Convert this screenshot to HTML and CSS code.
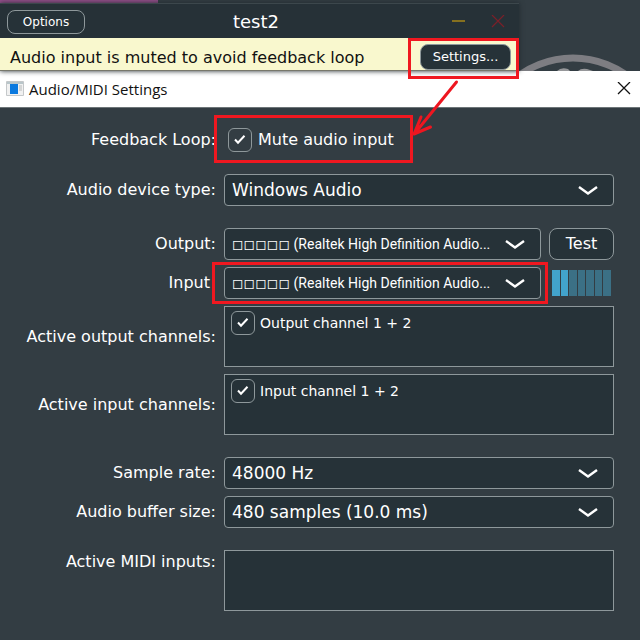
FILE: index.html
```html
<!DOCTYPE html>
<html lang="en">
<head>
<meta charset="utf-8">
<title>Audio/MIDI Settings</title>
<link rel="stylesheet" href="styles.css">
</head>
<body>
<header class="desktop">
  <div class="strip"></div>
  <svg class="dial" width="167" height="17" viewBox="473 54 167 17" aria-hidden="true">
    <circle cx="573" cy="150" r="92" fill="none" stroke="#7d7d82" stroke-width="7"/>
    <path d="M557 71q4-4 11-2l2 2zM578 71q3-3 9-2l6 2z" fill="#96979a"/>
  </svg>
  <section class="plugin">
    <div class="plugin-bar">
      <button class="btn options" type="button">Options</button>
      <h1 class="plugin-title">test2</h1>
      <div class="window-buttons">
        <button class="icon-btn" type="button" aria-label="Minimise"><svg width="14" height="14" viewBox="0 0 14 14"><path d="M0 6h13" stroke="#85701f" stroke-width="2"/></svg></button>
        <button class="icon-btn" type="button" aria-label="Close window"><svg width="14" height="14" viewBox="0 0 14 14"><path d="M1 0l12 12M13 0L1 12" stroke="#7b2029" stroke-width="1.2"/></svg></button>
      </div>
    </div>
    <div class="notice">
      <p class="notice-text">Audio input is muted to avoid feedback loop</p>
      <div class="mark mark-settings"><button class="btn settings" type="button">Settings...</button></div>
    </div>
  </section>
</header>
<main class="dialog">
  <div class="dialog-bar">
    <svg width="18" height="16" viewBox="0 0 18 16" aria-hidden="true">
      <path d="M.5 .5h17v14H.5z" fill="#f1f1f1" stroke="#c5c8ca"/>
      <path d="M1 1h16v2H1z" fill="#b9c6ca"/>
      <path d="M4 3h8v10H4z" fill="#0b79df"/>
      <path d="M13 5h3M13 7h3M13 9h3" stroke="#b7babb"/>
    </svg>
    <h2 class="dialog-title">Audio/MIDI Settings</h2>
    <button class="icon-btn" type="button" aria-label="Close"><svg width="14" height="14" viewBox="0 0 14 14"><path d="M1 0l12 12M13 0L1 12" stroke="#111" stroke-width="1.3"/></svg></button>
  </div>
  <form class="form">
    <div class="group">
      <div class="row">
        <span class="label">Feedback Loop:</span>
        <div class="mark mark-mute">
          <label class="check"><span class="tick"><input type="checkbox" checked><svg width="24" height="24" viewBox="0 0 24 24"><path d="M7 11.500l3 3.200 6.500-7" fill="none" stroke="#fff" stroke-width="2"/></svg></span>Mute audio input</label>
        </div>
      </div>
    </div>
    <div class="group">
      <div class="row">
        <label class="label" for="type">Audio device type:</label>
        <div class="combo"><select id="type"><option>Windows Audio</option></select><svg class="chevron" width="22" height="12" viewBox="0 0 22 12"><path d="M2 2l9 6.500L20 2" fill="none" stroke="#fff" stroke-width="2.4"/></svg></div>
      </div>
    </div>
    <div class="group">
      <div class="row">
        <label class="label" for="out">Output:</label>
        <div class="device">
          <div class="combo"><select id="out" class="narrow"><option>◻◻◻◻◻ (Realtek High Definition Audio...</option></select><svg class="chevron" width="22" height="12" viewBox="0 0 22 12"><path d="M2 2l9 6.500L20 2" fill="none" stroke="#fff" stroke-width="2.4"/></svg></div>
          <button class="btn test" type="button">Test</button>
        </div>
      </div>
      <div class="row">
        <label class="label label-input" for="in">Input</label>
        <div class="device">
          <div class="combo mark mark-input"><select id="in" class="narrow"><option>◻◻◻◻◻ (Realtek High Definition Audio...</option></select><svg class="chevron" width="22" height="12" viewBox="0 0 22 12"><path d="M2 2l9 6.500L20 2" fill="none" stroke="#fff" stroke-width="2.4"/></svg></div>
          <div class="level" role="meter" aria-label="Input level" aria-valuemin="0" aria-valuemax="7" aria-valuenow="2"><i class="on"></i><i class="on"></i><i></i><i></i><i></i><i></i><i></i></div>
        </div>
      </div>
      <div class="row">
        <span class="label">Active output channels:</span>
        <div class="list"><label class="check small"><span class="tick"><input type="checkbox" checked><svg width="24" height="24" viewBox="0 0 24 24"><path d="M7 11.500l3 3.200 6.500-7" fill="none" stroke="#fff" stroke-width="2"/></svg></span>Output channel 1 + 2</label></div>
      </div>
      <div class="row">
        <span class="label">Active input channels:</span>
        <div class="list"><label class="check small"><span class="tick"><input type="checkbox" checked><svg width="24" height="24" viewBox="0 0 24 24"><path d="M7 11.500l3 3.200 6.500-7" fill="none" stroke="#fff" stroke-width="2"/></svg></span>Input channel 1 + 2</label></div>
      </div>
    </div>
    <div class="group">
      <div class="row">
        <label class="label" for="rate">Sample rate:</label>
        <div class="combo"><select id="rate"><option>48000 Hz</option></select><svg class="chevron" width="22" height="12" viewBox="0 0 22 12"><path d="M2 2l9 6.500L20 2" fill="none" stroke="#fff" stroke-width="2.4"/></svg></div>
      </div>
      <div class="row">
        <label class="label" for="buffer">Audio buffer size:</label>
        <div class="combo"><select id="buffer"><option>480 samples (10.0 ms)</option></select><svg class="chevron" width="22" height="12" viewBox="0 0 22 12"><path d="M2 2l9 6.500L20 2" fill="none" stroke="#fff" stroke-width="2.4"/></svg></div>
      </div>
    </div>
    <div class="group">
      <div class="row row-top">
        <span class="label">Active MIDI inputs:</span>
        <div class="list"></div>
      </div>
    </div>
  </form>
</main>
<svg class="arrow" width="50" height="58" viewBox="410 79 50 58" aria-hidden="true">
  <path d="M456.500 82L415 133M421 117L414 134L430.500 127" fill="none" stroke="#ee1620" stroke-width="3" stroke-linecap="round" stroke-linejoin="round"/>
</svg>
</body>
</html>
```
FILE: styles.css
```css
* { box-sizing: border-box; }

body {
  margin: 0;
  min-height: 100vh;
  position: relative;
  background: #333d43;
  color: #fff;
  font: 16px/24px "DejaVu Sans", sans-serif;
}

h1, h2, p { margin: 0; font-weight: normal; }

button, select, input { font: inherit; color: inherit; margin: 0; }

.btn {
  background: #263238;
  border: 1px solid #8e989b;
  border-radius: 8px;
  padding: 0;
}

.icon-btn {
  display: flex;
  background: none;
  border: 0;
  padding: 0;
}

/* Plugin window behind the dialog */
.desktop { position: relative; }

.strip {
  height: 3px;
  width: 158px;
  background: #964f8c;
}

.dial {
  position: absolute;
  right: 0;
  bottom: 0;
}

.plugin {
  position: relative;
  width: calc(100% - 121px);
  box-shadow: 0 0 5px #20292e;
}

.plugin-bar {
  display: grid;
  grid-template-columns: 1fr auto 1fr;
  align-items: center;
  height: 35px;
  padding: 2px 14px 0 7px;
  background: #263137;
  border-top: 1px solid #3c474c;
}

.options {
  width: 78px;
  height: 24px;
  font-size: 12px;
  line-height: 20px;
}

.plugin-title { font-size: 18px; }

.window-buttons {
  display: flex;
  justify-content: flex-end;
  gap: 25px;
}

.notice {
  display: flex;
  justify-content: space-between;
  align-items: center;
  height: 33px;
  padding: 6px 8px 0 10px;
  background: #f9f8ce;
  border-bottom: 1px solid #77776b;
  color: #111;
}

.notice-text { padding-top: 2px; white-space: nowrap; }

.settings {
  display: block;
  width: 91px;
  height: 26px;
  color: #fff;
  font-size: 13px;
}

/* Red frames that point at a control */
.mark { position: relative; }

.mark::after {
  content: "";
  position: absolute;
  z-index: 2;
  border: 3px solid #f01820;
  pointer-events: none;
}

.mark-settings::after { inset: -6px -8px -9px -12px; }
.mark-mute::after { inset: -13px -19px -11px -14px; }
.mark-input::after { inset: -5px -7px -5px -12px; }

.arrow {
  position: absolute;
  left: calc(100% - 230px);
  top: 79px;
  z-index: 3;
}

/* Dialog */
.dialog-bar {
  display: flex;
  align-items: center;
  gap: 5px;
  height: 37px;
  padding: 0 9px 0 6px;
  background: #fff;
  border-bottom: 1px solid #6d7578;
  color: #111;
}

.dialog-title {
  flex: 1;
  font: 15px/24px "Open Sans", sans-serif;
}

.form {
  display: grid;
  gap: 22px;
  padding: 20px 26px 24px 0;
}

.group { display: grid; gap: 7px; }

.row {
  display: grid;
  grid-template-columns: 216px minmax(0, 1fr);
  column-gap: 8px;
  align-items: center;
}

.row-top { align-items: start; }

.label { text-align: right; }
.label-input { padding-right: 6px; }

.mark-mute { justify-self: start; margin-left: 4px; }

.check {
  display: flex;
  align-items: center;
  gap: 6px;
}

.tick { display: grid; }

.tick > * { grid-area: 1 / 1; pointer-events: none; }

.tick input {
  appearance: none;
  width: 24px;
  height: 24px;
  border: 1px solid #8e989b;
  border-radius: 6px;
  pointer-events: auto;
}

.small { font-size: 14px; gap: 5px; }

.combo { display: grid; position: relative; flex: 1; }

.combo select {
  appearance: none;
  width: 100%;
  height: 32px;
  padding: 0 34px 0 7px;
  background: #263238;
  border: 1px solid #8e989b;
  border-radius: 4px;
  font-size: 17px;
}

.combo .narrow {
  font-family: Roboto, "DejaVu Sans", sans-serif;
  font-size: 14px;
}

.chevron {
  position: absolute;
  right: 15px;
  top: 11px;
  pointer-events: none;
}

.device { display: flex; align-items: center; gap: 8px; }

.test { width: 65px; height: 32px; }

.level {
  display: flex;
  gap: 1px;
  width: 65px;
  height: 26px;
  padding: 0 3px;
}

.level i { flex: 1; background: #3b7085; }
.level .on { background: #42a3cb; }

.list {
  height: 61px;
  padding: 4px 6px;
  background: #263238;
  border: 1px solid #8e989b;
}
```
